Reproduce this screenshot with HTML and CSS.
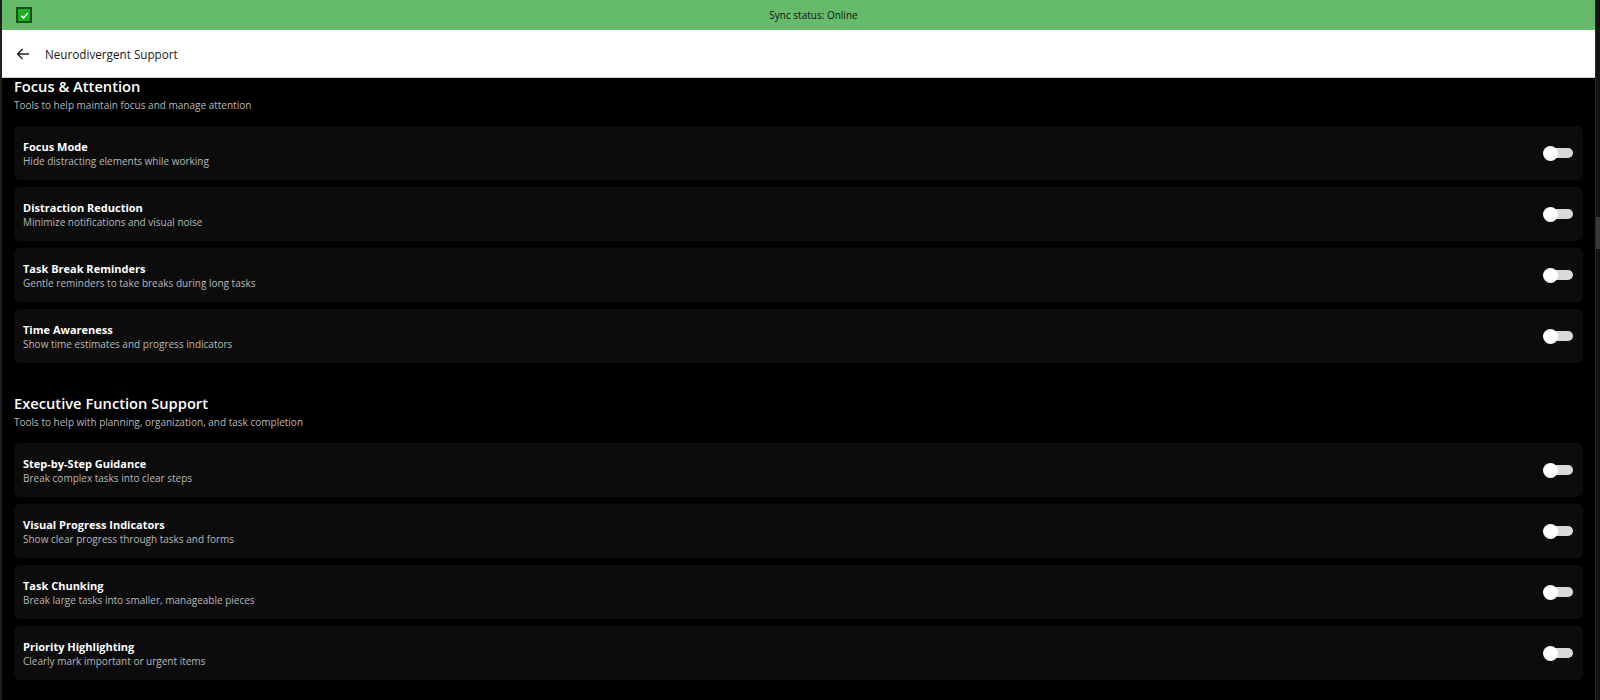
FILE: index.html
```html
<!DOCTYPE html>
<html lang="en">
<head>
  <meta charset="UTF-8">
  <meta name="viewport" content="width=device-width, initial-scale=1.0">
  <title>Neurodivergent Support</title>
  <link rel="stylesheet" href="styles.css">
</head>
<body>
  <div class="window">
    <div class="app">
      <div class="sync-bar">
        <span class="sync-check">
          <svg width="11" height="11" viewBox="0 0 12 12"><path d="M2.5 6.3 L5 8.6 L9.6 3.4" fill="none" stroke="#fff" stroke-width="1.6"/></svg>
        </span>
        <span class="sync-text">Sync status: Online</span>
      </div>

      <div class="app-bar">
        <svg class="back" width="14" height="14" viewBox="0 0 14 14"><path d="M13 7 H1.6 M6.6 2 L1.6 7 L6.6 12" fill="none" stroke="#222" stroke-width="1.4"/></svg>
        <span class="app-title">Neurodivergent Support</span>
      </div>

      <div class="content">
        <div class="section">
          <h2>Focus &amp; Attention</h2>
          <p class="section-desc">Tools to help maintain focus and manage attention</p>

          <div class="card">
            <div class="card-text">
              <div class="card-title">Focus Mode</div>
              <div class="card-desc">Hide distracting elements while working</div>
            </div>
            <span class="toggle"></span>
          </div>
          <div class="card">
            <div class="card-text">
              <div class="card-title">Distraction Reduction</div>
              <div class="card-desc">Minimize notifications and visual noise</div>
            </div>
            <span class="toggle"></span>
          </div>
          <div class="card">
            <div class="card-text">
              <div class="card-title">Task Break Reminders</div>
              <div class="card-desc">Gentle reminders to take breaks during long tasks</div>
            </div>
            <span class="toggle"></span>
          </div>
          <div class="card">
            <div class="card-text">
              <div class="card-title">Time Awareness</div>
              <div class="card-desc">Show time estimates and progress indicators</div>
            </div>
            <span class="toggle"></span>
          </div>
        </div>

        <div class="section">
          <h2>Executive Function Support</h2>
          <p class="section-desc">Tools to help with planning, organization, and task completion</p>

          <div class="card">
            <div class="card-text">
              <div class="card-title">Step-by-Step Guidance</div>
              <div class="card-desc">Break complex tasks into clear steps</div>
            </div>
            <span class="toggle"></span>
          </div>
          <div class="card">
            <div class="card-text">
              <div class="card-title">Visual Progress Indicators</div>
              <div class="card-desc">Show clear progress through tasks and forms</div>
            </div>
            <span class="toggle"></span>
          </div>
          <div class="card">
            <div class="card-text">
              <div class="card-title">Task Chunking</div>
              <div class="card-desc">Break large tasks into smaller, manageable pieces</div>
            </div>
            <span class="toggle"></span>
          </div>
          <div class="card">
            <div class="card-text">
              <div class="card-title">Priority Highlighting</div>
              <div class="card-desc">Clearly mark important or urgent items</div>
            </div>
            <span class="toggle"></span>
          </div>
        </div>
      </div>
    </div>

    <div class="scrollbar">
      <div class="thumb"></div>
    </div>
  </div>
</body>
</html>
```

FILE: styles.css
```css
html, body {
  margin: 0;
  height: 100%;
  overflow: hidden;
}
body {
  background-color: #000;
  color: white;
  font-family: "Open Sans", "Noto Sans", Arial, sans-serif;
}
.window {
  display: flex;
  height: 700px;
}
.app {
  flex: 1;
  border-left: 2px solid #1f1f1f;
  display: flex;
  flex-direction: column;
  min-width: 0;
}
.sync-bar {
  flex-shrink: 0;
  height: 30px;
  background-color: #66bb6a;
  display: flex;
  align-items: center;
  padding-left: 14px;
}
.sync-check {
  width: 12px;
  height: 12px;
  border: 2px solid #1d4d1d;
  background-color: #18b418;
  display: flex;
  align-items: center;
  justify-content: center;
}
.sync-text {
  flex: 1;
  text-align: center;
  color: #111;
  font-size: 10px;
}
.app-bar {
  flex-shrink: 0;
  height: 47px;
  background-color: white;
  border-bottom: 1px solid #cfcfcf;
  display: flex;
  align-items: center;
  padding-left: 14px;
}
.back {
  margin-right: 15px;
}
.app-title {
  color: #1a1a1a;
  font-size: 11.7px;
}
.content {
  flex: 1;
  min-height: 0;
  padding: 0 12px 0 12px;
}
.section {
  margin-bottom: 32px;
}
h2 {
  font-size: 14.7px;
  font-weight: 600;
  margin: -1px 0 0 0;
  line-height: 18px;
}
.section-desc {
  margin: 3px 0 14px 0;
  font-size: 10px;
  color: #b8b8b8;
  line-height: 14px;
}
.card {
  background-color: #0c0c0c;
  border-radius: 6px;
  height: 54px;
  margin-bottom: 7px;
  display: flex;
  align-items: center;
  padding: 0 9px;
}
.card-text {
  flex: 1;
}
.card-title {
  font-size: 11px;
  font-weight: 700;
  line-height: 15px;
}
.card-desc {
  font-size: 10px;
  color: #b8b8b8;
  line-height: 14px;
}
.toggle {
  position: relative;
  width: 28px;
  height: 10px;
  border-radius: 5px;
  background-color: #d9d9d9;
  margin-right: 1px;
}
.toggle::before {
  content: "";
  position: absolute;
  left: -2px;
  top: -2.5px;
  width: 15px;
  height: 15px;
  border-radius: 50%;
  background-color: #fff;
}
.scrollbar {
  width: 4px;
  border-left: 1px solid #2a2a2a;
  background-color: #141414;
  padding-top: 217px;
}
.thumb {
  height: 32px;
  background-color: #3a3a3a;
}
```
